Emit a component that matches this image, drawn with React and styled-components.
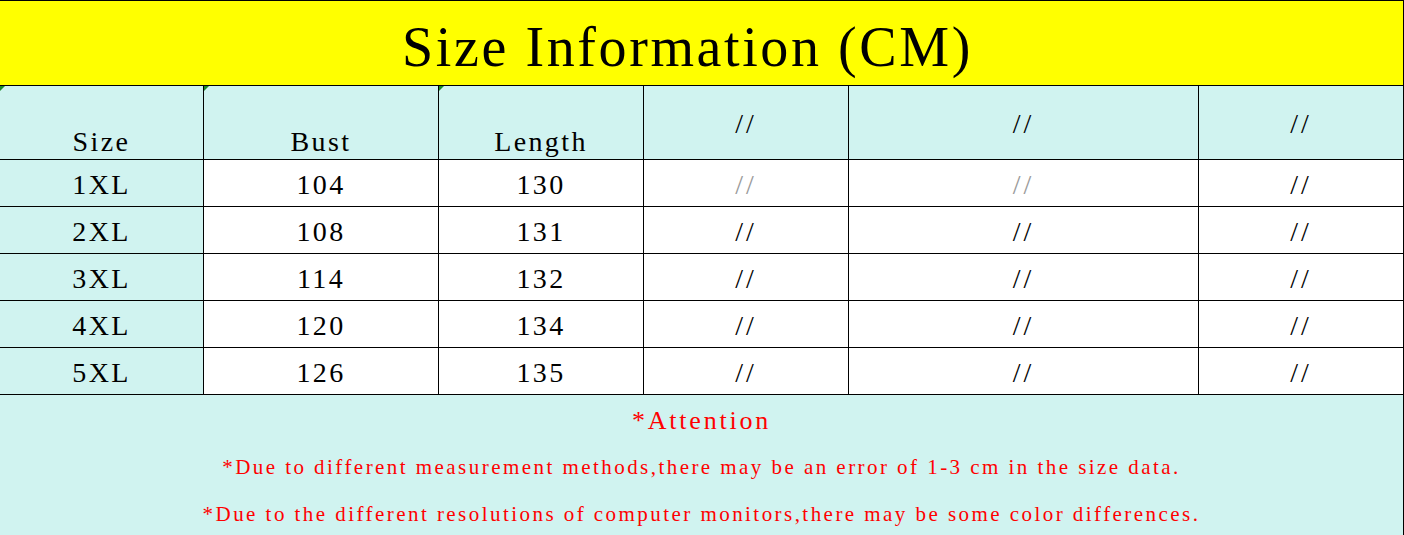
import styled, { createGlobalStyle } from "styled-components";

const GlobalStyle = createGlobalStyle`
    html, body {
        margin: 0;
        padding: 0;
        background: #ffffff;
        overflow: hidden;
    }
    * { box-sizing: border-box; }
`;

const Sheet = styled.div`
    width: 1404px;
    height: 535px;
    display: flex;
    flex-direction: column;
    font-family: "Liberation Serif", "Noto Sans CJK SC", serif;
    color: #000;
    border-right: 1px solid #000;
    overflow: hidden;
`;

const Title = styled.div`
    flex-shrink: 0;
    height: 86px;
    background: #ffff00;
    border-top: 1px solid #000;
    border-bottom: 1px solid #000;
    display: flex;
    align-items: center;
    justify-content: center;
    padding: 8px 28px 0 0;
    font-size: 56px;
    letter-spacing: 2.6px;
`;

const Grid = styled.div`
    flex-shrink: 0;
    display: grid;
    grid-template-columns: 204px 235px 205px 205px 350px 1fr;
    grid-template-rows: 74px repeat(5, 47px);
`;

const Cell = styled.div`
    position: relative;
    display: flex;
    justify-content: center;
    align-items: ${p => (p.$bottom ? "flex-end" : "center")};
    padding-bottom: ${p => (p.$bottom ? "1px" : "0")};
    padding-top: ${p => (p.$bottom ? "0" : "3px")};
    background: ${p => (p.$tint ? "#d0f3f0" : "#ffffff")};
    border-bottom: 1px solid #000;
    border-right: ${p => (p.$last ? "none" : "1px solid #000")};
    font-size: 28px;
    letter-spacing: ${p => (p.$slash ? "3px" : "2.4px")};
    color: ${p => (p.$faint ? "#9a9a9a" : "#000")};

    &::before {
        content: "";
        display: ${p => (p.$marked ? "block" : "none")};
        position: absolute;
        top: 0;
        left: 0;
        border-top: 5px solid #1a8a2a;
        border-right: 5px solid transparent;
    }
`;

const Notes = styled.div`
    flex: 1;
    min-height: 0;
    background: #d0f3f0;
    display: flex;
    flex-direction: column;
    align-items: center;
    color: #ff0000;
    padding-top: 11px;
`;

const Attention = styled.div`
    font-size: 26px;
    letter-spacing: 2.8px;
    line-height: 30px;
    margin-bottom: 19px;
`;

const Note = styled.div`
    font-size: 21px;
    letter-spacing: 2.45px;
    line-height: 24px;
    margin-bottom: 23px;
`;

const rows = [
    ["1XL", "104", "130"],
    ["2XL", "108", "131"],
    ["3XL", "114", "132"],
    ["4XL", "120", "134"],
    ["5XL", "126", "135"],
];

const App = () => {
    return (
        <>
            <GlobalStyle />
            <Sheet>
                <Title>Size Information (CM)</Title>
                <Grid>
                    <Cell $tint $bottom $marked>Size</Cell>
                    <Cell $tint $bottom $marked>Bust</Cell>
                    <Cell $tint $bottom $marked>Length</Cell>
                    <Cell $tint $slash>//</Cell>
                    <Cell $tint $slash>//</Cell>
                    <Cell $tint $slash $last>//</Cell>
                    {rows.map((r, i) => [
                        <Cell key={i + "a"} $tint>{r[0]}</Cell>,
                        <Cell key={i + "b"}>{r[1]}</Cell>,
                        <Cell key={i + "c"}>{r[2]}</Cell>,
                        <Cell key={i + "d"} $slash $faint={i === 0}>//</Cell>,
                        <Cell key={i + "e"} $slash $faint={i === 0}>//</Cell>,
                        <Cell key={i + "f"} $slash $last>//</Cell>,
                    ])}
                </Grid>
                <Notes>
                    <Attention>*Attention</Attention>
                    <Note>*Due to different measurement methods,there may be an error of 1-3 cm in the size data.</Note>
                    <Note>*Due to the different resolutions of computer monitors,there may be some color differences.</Note>
                </Notes>
            </Sheet>
        </>
    );
};

export default App;
